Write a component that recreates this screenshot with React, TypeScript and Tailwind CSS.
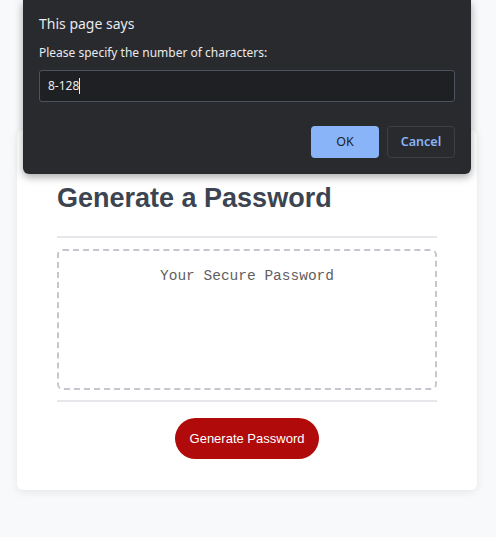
export default function App() {
  return (
    <div className="relative w-full min-h-screen bg-[#f8f9fa] font-['Liberation_Sans',Arial,sans-serif]">
      <div className="pt-[130px] pb-[47px] px-[17px]">
        <div className="w-[460px] bg-white rounded-md shadow-[0_2px_8px_rgba(0,0,0,0.08)] px-10 pt-[52px] pb-[31px]">
          <h1 className="text-[27px] leading-8 font-bold text-[#3b4450]">
            Generate a Password
          </h1>
          <hr className="mt-[22px] border-0 h-[2px] bg-[#e6e7ea]" />
          <div className="mt-[11px] h-[141px] rounded-md border-2 border-dashed border-[#c4c7cd] pt-[15px] text-center">
            <p className="font-['Liberation_Mono',monospace] text-[14.5px] text-[#5f5f5f]">
              Your Secure Password
            </p>
          </div>
          <hr className="mt-[10px] border-0 h-[2px] bg-[#e6e7ea]" />
          <div className="mt-4 flex justify-center">
            <button className="h-[41px] w-[144px] rounded-full bg-[#b00a0a] text-white text-[13px]">
              Generate Password
            </button>
          </div>
        </div>
      </div>

      {/* browser prompt dialog */}
      <div className="absolute top-0 left-[23px] w-[448px] h-[174px] bg-[#292a2d] rounded-b-md shadow-[0_3px_8px_rgba(0,0,0,0.35)] px-4 font-['Noto_Sans','Open_Sans',sans-serif]">
        <p className="pt-[14px] text-[14px] leading-5 text-[#e8eaed]">This page says</p>
        <p className="mt-[9px] text-[12px] leading-5 text-[#e8eaed]">
          Please specify the number of characters:
        </p>
        <div className="mt-[7px] h-[32px] rounded-[3px] border border-[#4c5260] bg-[#1f2023] px-2 flex items-center">
          <span className="text-[12px] text-[#e8eaed]">8-128</span>
          <span className="w-px h-[16px] bg-[#e8eaed]" />
        </div>
        <div className="mt-[24px] flex justify-end gap-2">
          <button className="w-[68px] h-[32px] rounded bg-[#8ab4f8] text-[12.5px] text-[#202124]">
            OK
          </button>
          <button className="w-[68px] h-[32px] rounded border border-[#3c4043] text-[12.5px] font-semibold text-[#8ab4f8]">
            Cancel
          </button>
        </div>
      </div>
    </div>
  );
}
